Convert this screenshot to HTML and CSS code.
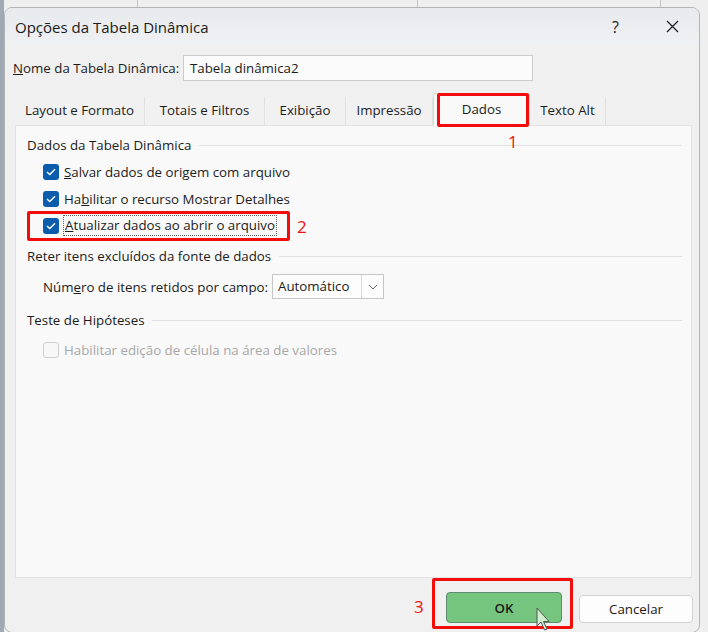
FILE: index.html
```html
<!DOCTYPE html>
<html lang="pt">
<head>
<meta charset="utf-8">
<title>Opções da Tabela Dinâmica</title>
<link rel="stylesheet" href="styles.css">
</head>
<body>
<div class="screen">
  <div class="dialog">
    <div class="titlebar">
      <span class="title">Opções da Tabela Dinâmica</span>
      <span class="help">?</span>
      <span class="close">
        <svg width="13" height="13" viewBox="0 0 13 13"><path d="M1 1 L12 12 M12 1 L1 12" stroke="#222" stroke-width="1.3" fill="none"/></svg>
      </span>
    </div>

    <div class="namerow">
      <label class="namelabel"><u>N</u>ome da Tabela Dinâmica:</label>
      <div class="textbox">Tabela dinâmica2</div>
    </div>

    <div class="tabs">
      <div class="tab t1">Layout e Formato</div>
      <div class="tab t2">Totais e Filtros</div>
      <div class="tab t3">Exibição</div>
      <div class="tab t4">Impressão</div>
      <div class="tab t5 selected">Dados</div>
      <div class="tab t6">Texto Alt</div>
    </div>

    <div class="panel">
      <div class="group first"><span>Dados da Tabela Dinâmica</span><i class="rule"></i></div>
      <div class="check"><span class="box on"><svg width="10" height="8" viewBox="0 0 10 8"><path d="M1 4 L3.8 6.6 L9 1.2" stroke="#fff" stroke-width="1.4" fill="none"/></svg></span><span><u>S</u>alvar dados de origem com arquivo</span></div>
      <div class="check"><span class="box on"><svg width="10" height="8" viewBox="0 0 10 8"><path d="M1 4 L3.8 6.6 L9 1.2" stroke="#fff" stroke-width="1.4" fill="none"/></svg></span><span>Ha<u>b</u>ilitar o recurso Mostrar Detalhes</span></div>
      <div class="check"><span class="box on"><svg width="10" height="8" viewBox="0 0 10 8"><path d="M1 4 L3.8 6.6 L9 1.2" stroke="#fff" stroke-width="1.4" fill="none"/></svg></span><span class="focus"><u>A</u>tualizar dados ao abrir o arquivo</span></div>

      <div class="group g2"><span>Reter itens excluídos da fonte de dados</span><i class="rule"></i></div>
      <div class="selrow">
        <span class="sellabel">Núm<u>e</u>ro de itens retidos por campo:</span>
        <div class="select"><span class="selval">Automático</span><span class="selarrow"><svg width="10" height="6" viewBox="0 0 10 6"><path d="M1 1 L5 5 L9 1" stroke="#666" stroke-width="1" fill="none"/></svg></span></div>
      </div>

      <div class="group g3"><span>Teste de Hipóteses</span><i class="rule"></i></div>
      <div class="check disabled"><span class="box off"></span><span>Habilitar edição de célula na área de valores</span></div>
    </div>

    <div class="footer">
      <button class="btn ok">OK</button>
      <button class="btn cancel">Cancelar</button>
    </div>
  </div>

  <div class="mark m1"></div>
  <div class="num n1">1</div>
  <div class="mark m2"></div>
  <div class="num n2">2</div>
  <div class="mark m3"></div>
  <div class="num n3">3</div>
  <svg class="cursor" width="16" height="26" viewBox="0 0 16 26"><path d="M1 1 L1 19 L5 15 L8.5 23 L11 22 L7.5 14.5 L13 14.5 Z" fill="#cfeccf" stroke="#555" stroke-width="1"/></svg>
</div>
</body>
</html>
```

FILE: styles.css
```css
* { box-sizing: border-box; }
html, body { margin: 0; padding: 0; }
body {
  width: 708px;
  height: 632px;
  overflow: hidden;
  font-family: "Open Sans", "Noto Sans", sans-serif;
  font-size: 13.3px;
  color: #1c1c1c;
  background: #e8e8e8;
}
.screen {
  position: relative;
  width: 708px;
  height: 632px;
  padding: 7px 8px 0 4px;
  background:
    linear-gradient(90deg, #9fa9b3 0 4px, transparent 4px),
    linear-gradient(90deg, transparent 137px, #c4c4c4 137px 138px, transparent 138px 417px, #c4c4c4 417px 418px, transparent 418px 660px, #c4c4c4 660px 661px, transparent 661px),
    #efefef;
}
.dialog {
  height: 626px;
  background: #f0f0f0;
  border: 1px solid #b4b4b4;
  border-radius: 8px;
  display: flex;
  flex-direction: column;
  overflow: hidden;
}
.titlebar {
  height: 37px;
  flex: none;
  display: flex;
  align-items: center;
  padding-left: 10px;
  background: linear-gradient(#e7eaee, #eff0f2);
}
.title { flex: 1; font-size: 15px; color: #1a1a1a; }
.help { font-size: 16px; margin-right: 47px; color: #222; }
.close { display: flex; margin-right: 20px; }

.namerow {
  display: flex;
  align-items: center;
  margin-top: 10px;
  padding-left: 8px;
}
.namelabel { width: 170px; }
.textbox {
  width: 350px;
  height: 26px;
  border: 1px solid #cbcbcb;
  background: #fbfbfb;
  padding: 3px 6px;
  line-height: 18px;
}

.tabs {
  display: flex;
  align-items: flex-end;
  margin: 12px 0 0 10px;
  height: 32px;
}
.tab {
  height: 28px;
  line-height: 27px;
  text-align: center;
  border-right: 1px solid #e0e0e0;
  background: #f1f1f1;
}
.t1 { width: 130px; }
.t2 { width: 120px; }
.t3 { width: 81px; }
.t4 { width: 87px; }
.t5 { width: 97px; }
.t6 { width: 76px; border-right: 1px solid #dedede; }
.tab.selected {
  height: 33px;
  line-height: 30px;
  background: #f9f9f9;
  border: 1px solid #dcdcdc;
  border-bottom: none;
  margin-bottom: -1px;
  position: relative;
}

.panel {
  height: 453px;
  flex: none;
  margin: 0 7px 0 10px;
  background: #f9f9f9;
  border: 1px solid #e2e2e2;
  padding-left: 11px;
  padding-right: 9px;
}
.group {
  display: flex;
  align-items: center;
  height: 18px;
  line-height: 18px;
}
.group.first { margin-top: 10px; margin-bottom: 4px; }
.group.g2 { margin-top: 8px; }
.group.g3 { margin-top: 12px; margin-bottom: 7px; }
.rule {
  flex: 1;
  height: 1px;
  background: #e1e1e1;
  margin-left: 8px;
}
.check {
  display: flex;
  align-items: center;
  height: 27px;
  padding-left: 16px;
}
.box {
  width: 16px;
  height: 16px;
  border-radius: 3px;
  margin-right: 5px;
  display: flex;
  align-items: center;
  justify-content: center;
  flex: none;
}
.box.on { background: #0b5cad; }
.box.off { border: 1px solid #cfcfcf; background: #f7f7f7; }
.focus {
  outline: 1px dotted #666;
  outline-offset: 0;
  padding: 0 1px;
  line-height: 19px;
}
.check.disabled { color: #a8a8a8; }

.selrow {
  display: flex;
  align-items: center;
  margin-top: 9px;
  padding-left: 16px;
  height: 25px;
}
.sellabel { width: 229px; }
.select {
  width: 112px;
  height: 25px;
  border: 1px solid #c6c6c6;
  background: #fdfdfd;
  display: flex;
}
.selval { flex: 1; padding-left: 5px; line-height: 23px; }
.selarrow {
  width: 22px;
  border-left: 1px solid #dadada;
  display: flex;
  align-items: center;
  justify-content: center;
}

.footer {
  flex: 1;
  display: flex;
  justify-content: flex-end;
  align-items: flex-end;
  padding: 0 6px 9px 0;
  gap: 17px;
}
.btn {
  font-family: inherit;
  font-size: 13.3px;
  color: #1a1a1a;
  border-radius: 4px;
  padding: 0;
}
.btn.ok {
  width: 116px;
  height: 31px;
  background: #75c57f;
  border: 1.5px solid #5d8c71;
  font-weight: 600;
}
.btn.cancel {
  width: 114px;
  height: 28px;
  background: #fdfdfd;
  border: 1px solid #d2d2d2;
}

.mark {
  position: absolute;
  border: 3px solid #f20d0d;
  border-radius: 2px;
}
.m1 { left: 437px; top: 93px; width: 92px; height: 34px; }
.m2 { left: 27px; top: 211px; width: 263px; height: 30px; }
.m3 { left: 432px; top: 578px; width: 141px; height: 51px; }
.num {
  position: absolute;
  color: #ee1111;
  font-size: 17px;
  line-height: 20px;
}
.n1 { left: 508px; top: 132px; }
.n2 { left: 297px; top: 217px; }
.n3 { left: 414px; top: 597px; }
.cursor { position: absolute; left: 536px; top: 607px; }
```
